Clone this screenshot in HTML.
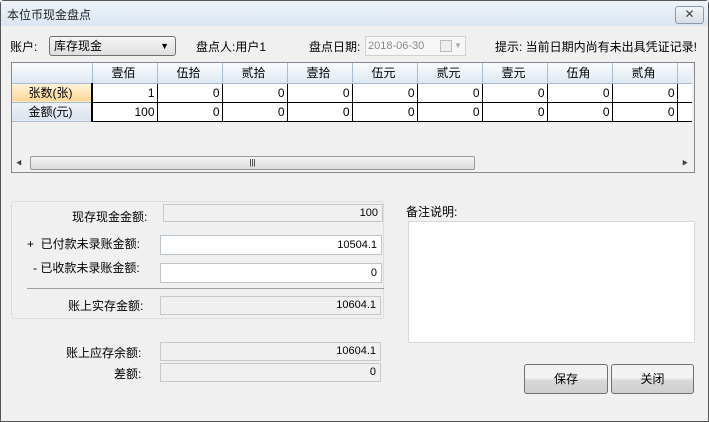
<!DOCTYPE html>
<html><head><meta charset="utf-8"><style>
*{margin:0;padding:0;box-sizing:border-box}
body{width:709px;height:422px;overflow:hidden;background:#f0f0f0;font-family:"Liberation Sans","Noto Sans CJK SC","WenQuanYi Zen Hei",sans-serif;font-size:12px;color:#000;position:relative}
.win{position:absolute;left:0;top:0;width:709px;height:422px;border:1px solid #555;border-radius:4px 4px 0 0;background:#f0f0f0}
.title{position:absolute;left:0;top:0;width:707px;height:25px;background:linear-gradient(#eef3f9,#dbe6f3);}
.title span{position:absolute;left:6px;top:5px;font-size:12px;color:#222}
.close{position:absolute;left:674px;top:5px;width:29px;height:18px;border:1px solid #8a9aab;border-radius:3px;background:linear-gradient(#f2f5f8,#d6dde6);text-align:center;font-size:12px;line-height:15px;color:#444}
.a{position:absolute;white-space:nowrap}
.box{position:absolute;border:1px solid #c8c8c8;background:#f0f0f0;text-align:right;padding-right:4px;font-size:11px;line-height:16px}
.w{background:#fff;border-color:#bcc4cc}
table{border-collapse:collapse;position:absolute;left:12px;top:63px}
td{height:19px;border-right:1px solid #000;border-bottom:1px solid #000;text-align:right;padding-right:2px;font-size:12px;background:#fff;width:65px}
td.e{width:15px;border-right:none}
tr.h td{background:linear-gradient(#fbfcfe,#dde7f2);border-right:1px solid #a8bdd4;border-bottom:1px solid #a8bdd4;text-align:center;font-size:12px;height:20px}
tr.h td.e{border-right:none}
td.rh{width:80px;text-align:center;background:linear-gradient(#eef2f7,#dbe3ee);border-right:2px solid #000;border-bottom:1px solid #a8bdd4;font-size:12px}
td.c{background:linear-gradient(#fff4dc,#fcd796)}
.btn{position:absolute;height:30px;border:1px solid #707070;border-radius:3px;background:linear-gradient(#f2f2f2 45%,#d8d8d8 55%,#cfcfcf);text-align:center;line-height:28px;font-size:12px}
</style></head><body>
<div class="win">
<div class="title"><span>本位币现金盘点</span><div class="close">✕</div></div>
</div>
<div class="a" style="left:10px;top:38px">账户:</div>
<div class="a" style="left:49px;top:36px;width:127px;height:20px;border:1px solid #707070;border-radius:3px;background:linear-gradient(#f6f6f6,#dedede);padding-left:4px;line-height:18px">库存现金<span style="position:absolute;right:6px;top:0;font-size:9px">▼</span></div>
<div class="a" style="left:196px;top:38px">盘点人:用户1</div>
<div class="a" style="left:309px;top:38px">盘点日期:</div>
<div class="a" style="left:365px;top:36px;width:101px;height:20px;border:1px solid #d0d0d0;background:#f7f7f7;color:#888;font-size:11px;line-height:18px;padding-left:2px">2018-06-30<span style="position:absolute;left:74px;top:3px;width:12px;height:12px;border:1px solid #bbb;background:#eee"></span><span style="position:absolute;left:88px;top:0;font-size:8px;color:#aaa">▼</span></div>
<div class="a" style="left:495px;top:38px">提示: 当前日期内尚有未出具凭证记录!</div>
<div class="a" style="left:11px;top:62px;width:684px;height:111px;border:1px solid #828790;background:#f0f0f0"></div>
<table>
<tr class="h"><td class="rh c" style="border-bottom:1px solid #a8bdd4"></td><td>壹佰</td><td>伍拾</td><td>贰拾</td><td>壹拾</td><td>伍元</td><td>贰元</td><td>壹元</td><td>伍角</td><td>贰角</td><td class="e"></td></tr>
<tr><td class="rh c">张数(张)</td><td>1</td><td>0</td><td>0</td><td>0</td><td>0</td><td>0</td><td>0</td><td>0</td><td>0</td><td class="e"></td></tr>
<tr><td class="rh">金额(元)</td><td>100</td><td>0</td><td>0</td><td>0</td><td>0</td><td>0</td><td>0</td><td>0</td><td>0</td><td class="e"></td></tr>
</table>
<div class="a" style="left:12px;top:155px;width:682px;height:17px;background:#f0f0f0"></div>
<div class="a" style="left:16px;top:158px;font-size:6px;color:#444">◀</div>
<div class="a" style="left:30px;top:156px;width:445px;height:14px;border:1px solid #999;border-radius:2px;background:linear-gradient(#f4f4f4,#dcdcdc);text-align:center;font-size:8px;line-height:12px">|||</div>
<div class="a" style="left:682px;top:158px;font-size:6px;color:#444">▶</div>

<div class="a" style="left:11px;top:201px;width:373px;height:118px;border:1px solid #d5dfe5;border-radius:3px"></div>
<div class="a" style="left:72px;top:208px">现存现金金额:</div>
<div class="box" style="left:163px;top:204px;width:220px;height:18px">100</div>
<div class="a" style="left:27px;top:235px">+&nbsp;&nbsp;已付款未录账金额:</div>
<div class="box w" style="left:160px;top:235px;width:222px;height:20px;line-height:18px">10504.1</div>
<div class="a" style="left:33px;top:259px">-&nbsp;已收款未录账金额:</div>
<div class="box w" style="left:160px;top:263px;width:222px;height:20px;line-height:18px">0</div>
<div class="a" style="left:27px;top:288px;width:357px;height:1px;background:#a0a0a0"></div>
<div class="a" style="left:68px;top:297px">账上实存金额:</div>
<div class="box" style="left:160px;top:296px;width:221px;height:19px">10604.1</div>
<div class="a" style="left:66px;top:344px">账上应存余额:</div>
<div class="box" style="left:160px;top:342px;width:221px;height:19px">10604.1</div>
<div class="a" style="left:114px;top:365px">差额:</div>
<div class="box" style="left:160px;top:363px;width:221px;height:19px">0</div>

<div class="a" style="left:406px;top:203px">备注说明:</div>
<div class="a" style="left:408px;top:221px;width:287px;height:122px;border:1px solid #d5d9de;background:#fff"></div>
<div class="btn" style="left:524px;top:364px;width:84px">保存</div>
<div class="btn" style="left:611px;top:364px;width:83px">关闭</div>
</body></html>
